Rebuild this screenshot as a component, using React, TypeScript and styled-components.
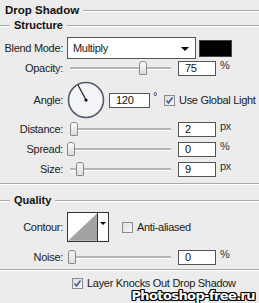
import React from "react";
import styled, { createGlobalStyle } from "styled-components";

const Global = createGlobalStyle`
	html, body {
		margin: 0;
		padding: 0;
		background: #ececec;
	}
`;

const Panel = styled.div`
	position: relative;
	width: 259px;
	height: 303px;
	overflow: hidden;
	background: #ececec;
	font-family: "Liberation Sans", Arial, sans-serif;
	font-size: 11px;
	letter-spacing: -0.3px;
	color: #1a1a1a;
	white-space: nowrap;
`;

const Heading = styled.div<{ $top: number; $lead: number }>`
	display: flex;
	align-items: center;
	gap: 4px;
	height: 14px;
	margin-top: ${(p) => p.$top}px;
	font-weight: bold;
	letter-spacing: 0;
	color: #111;
	&::before {
		content: "";
		width: ${(p) => p.$lead}px;
		height: 1px;
		background: #a9a9a9;
		box-shadow: 0 1px 0 #fff;
		display: ${(p) => (p.$lead ? "block" : "none")};
	}
	&::after {
		content: "";
		flex: 1;
		height: 1px;
		background: #a9a9a9;
		box-shadow: 0 1px 0 #fff;
	}
`;

const Title = styled(Heading)`
	padding-left: 5px;
	font-size: 11.5px;
`;

const Rule = styled.div<{ $top: number }>`
	height: 1px;
	margin-top: ${(p) => p.$top}px;
	background: #a9a9a9;
	box-shadow: 0 1px 0 #fff;
`;

const Row = styled.div<{ $top: number; $h: number }>`
	display: flex;
	align-items: center;
	height: ${(p) => p.$h}px;
	margin-top: ${(p) => p.$top}px;
`;

const Label = styled.div`
	width: 67px;
	display: flex;
	justify-content: flex-end;
	padding-right: 4px;
	box-sizing: border-box;
	color: #222;
	flex-shrink: 0;
`;

const Select = styled.div`
	position: relative;
	width: 129px;
	height: 22px;
	box-sizing: border-box;
	border: 1px solid #555;
	background: #fff;
	display: flex;
	align-items: center;
	padding-left: 5px;
	margin-right: 3px;
	&::after {
		content: "";
		position: absolute;
		right: 6px;
		top: 9px;
		border-left: 4px solid transparent;
		border-right: 4px solid transparent;
		border-top: 4px solid #000;
	}
`;

const Swatch = styled.div`
	width: 31px;
	height: 15px;
	background: #000;
	border: 1px solid #444;
`;

const Slider = styled.div`
	position: relative;
	width: 104px;
	height: 16px;
	margin-right: 7px;
	&::before {
		content: "";
		position: absolute;
		left: 3px;
		right: 0;
		top: 7px;
		height: 2px;
		background: #b5b5b5;
		border-bottom: 1px solid #fff;
	}
`;

const Thumb = styled.div`
	position: absolute;
	top: 1px;
	width: 6px;
	height: 12px;
	border: 1px solid #8a8a8a;
	border-radius: 3px 3px 1px 1px;
	background: linear-gradient(#fdfdfd, #dcdcdc);
`;

const Field = styled.div<{ $w?: number }>`
	width: ${(p) => p.$w ?? 38}px;
	height: 15px;
	box-sizing: border-box;
	border: 1px solid #555;
	background: #fff;
	padding-left: 6px;
	display: flex;
	align-items: center;
	color: #111;
	flex-shrink: 0;
`;

const Unit = styled.div`
	padding-left: 4px;
	align-self: flex-start;
	margin-top: -1px;
	color: #333;
`;

const Dial = styled.svg`
	flex-shrink: 0;
	margin-right: 4px;
`;

const Degree = styled.div`
	width: 14px;
	padding-left: 3px;
	box-sizing: border-box;
	align-self: flex-start;
	margin-top: 9px;
	flex-shrink: 0;
`;

const Box = styled.svg`
	flex-shrink: 0;
	margin-right: 4px;
`;

const Contour = styled.div`
	display: flex;
	width: 42px;
	height: 30px;
	box-sizing: border-box;
	border: 1px solid #333;
	background: #fff;
	margin-right: 13px;
	flex-shrink: 0;
`;

const ContourArrow = styled.div`
	width: 10px;
	border-left: 1px solid #333;
	position: relative;
	&::after {
		content: "";
		position: absolute;
		left: 2px;
		top: 9px;
		border-left: 3px solid transparent;
		border-right: 3px solid transparent;
		border-top: 3px solid #000;
	}
`;

const Knock = styled(Row)`
	padding-left: 72px;
`;

const Watermark = styled.div`
	position: absolute;
	right: 4px;
	bottom: 0;
	font-family: "DejaVu Sans", sans-serif;
	font-weight: bold;
	font-size: 13px;
	letter-spacing: -0.6px;
	color: #fff;
	text-shadow: -1px -1px 0 #000, 1px -1px 0 #000, -1px 1px 0 #000, 1px 1px 0 #000,
		0 1px 0 #000, 0 -1px 0 #000, 1px 0 0 #000, -1px 0 0 #000;
`;

const Check = ({ on }: { on: boolean }) => (
	<Box width="11" height="11" viewBox="0 0 11 11">
		<defs>
			<linearGradient id="cb" x1="0" y1="0" x2="1" y2="1">
				<stop offset="0" stopColor="#dcdcdc" />
				<stop offset="1" stopColor="#fafafa" />
			</linearGradient>
		</defs>
		<rect x="0.5" y="0.5" width="10" height="10" fill="url(#cb)" stroke="#8c8c8c" />
		{on && <path d="M2.5 5.5 L4.5 8 L8.5 2.5" fill="none" stroke="#3b5aa8" strokeWidth="1.6" />}
	</Box>
);

const SliderRow = ({ top, label, value, unit, pos }: { top: number; label: string; value: string; unit: string; pos: number }) => (
	<Row $top={top} $h={16}>
		<Label>{label}</Label>
		<Slider>
			<Thumb style={{ left: pos }} />
		</Slider>
		<Field>{value}</Field>
		<Unit>{unit}</Unit>
	</Row>
);

const App = () => {
	return (
		<>
			<Global />
			<Panel>
				<Title $top={3} $lead={0}>Drop Shadow</Title>
				<Heading $top={1} $lead={10}>Structure</Heading>
				<Row $top={5} $h={22}>
					<Label>Blend Mode:</Label>
					<Select>Multiply</Select>
					<Swatch />
				</Row>
				<SliderRow top={1} label="Opacity:" value="75" unit="%" pos={72} />
				<Row $top={5} $h={38}>
					<Label>Angle:</Label>
					<Dial width="38" height="38" viewBox="0 0 38 38">
						<circle cx="19" cy="19" r="17.5" fill="#f4f5f8" stroke="#555a6e" strokeWidth="1.6" />
						<line x1="19" y1="19" x2="11" y2="4" stroke="#111" strokeWidth="1.1" />
						<circle cx="19" cy="19" r="1.6" fill="#000" />
					</Dial>
					<Field $w={41}>120</Field>
					<Degree>°</Degree>
					<Check on />
					<span>Use Global Light</span>
				</Row>
				<SliderRow top={2} label="Distance:" value="2" unit="px" pos={3} />
				<SliderRow top={4} label="Spread:" value="0" unit="%" pos={0} />
				<SliderRow top={4} label="Size:" value="9" unit="px" pos={9} />
				<Rule $top={6} />
				<Heading $top={9} $lead={10}>Quality</Heading>
				<Row $top={5} $h={30}>
					<Label>Contour:</Label>
					<Contour>
						<svg width="30" height="28" viewBox="0 0 30 28">
							<polygon points="0,28 30,0 30,28" fill="#a3a3a3" />
						</svg>
						<ContourArrow />
					</Contour>
					<Check on={false} />
					<span>Anti-aliased</span>
				</Row>
				<SliderRow top={7} label="Noise:" value="0" unit="%" pos={1} />
				<Rule $top={4} />
				<Knock $top={6} $h={14}>
					<Check on />
					<span>Layer Knocks Out Drop Shadow</span>
				</Knock>
				<Watermark>Photoshop-free.ru</Watermark>
			</Panel>
		</>
	);
};

export default App;
